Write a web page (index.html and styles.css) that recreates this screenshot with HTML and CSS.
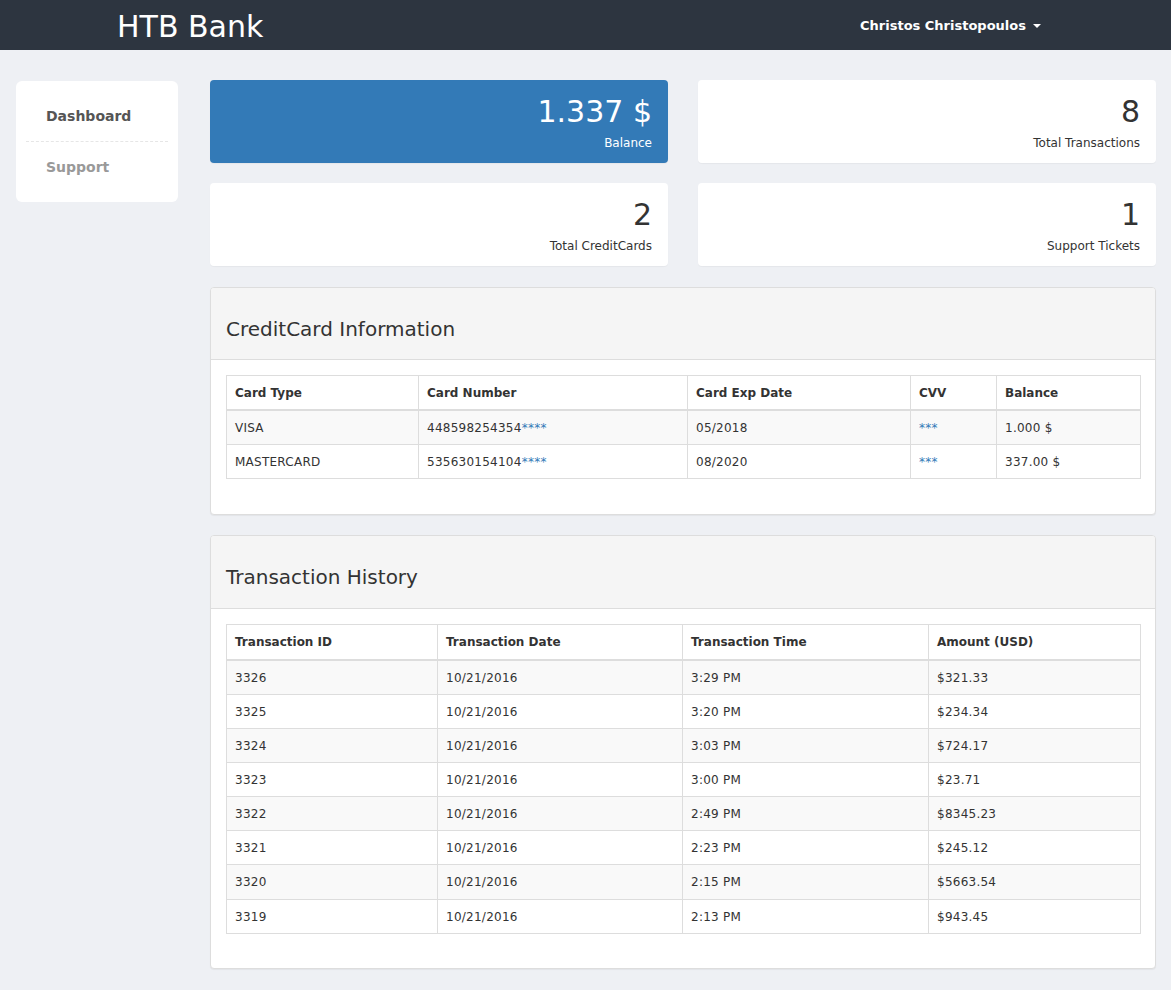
FILE: index.html
```html
<!DOCTYPE html>
<html lang="en">
<head>
<meta charset="utf-8">
<title>HTB Bank</title>
<link rel="stylesheet" href="styles.css">
</head>
<body>
<nav class="navbar">
  <div class="brand">HTB Bank</div>
  <div class="user">Christos Christopoulos <span class="caret"></span></div>
</nav>
<div class="page">
  <aside class="sidebar">
    <a class="nav-item active">Dashboard</a>
    <a class="nav-item">Support</a>
  </aside>
  <main class="main">
    <div class="stats">
      <div class="stat stat-primary">
        <div class="stat-value">1.337 $</div>
        <div class="stat-label">Balance</div>
      </div>
      <div class="stat">
        <div class="stat-value">8</div>
        <div class="stat-label">Total Transactions</div>
      </div>
      <div class="stat">
        <div class="stat-value">2</div>
        <div class="stat-label">Total CreditCards</div>
      </div>
      <div class="stat">
        <div class="stat-value">1</div>
        <div class="stat-label">Support Tickets</div>
      </div>
    </div>

    <section class="panel">
      <div class="panel-heading"><h3 class="panel-title">CreditCard Information</h3></div>
      <div class="panel-body">
        <table class="table cards">
          <thead>
            <tr><th class="c1">Card Type</th><th class="c2">Card Number</th><th class="c3">Card Exp Date</th><th class="c4">CVV</th><th class="c5">Balance</th></tr>
          </thead>
          <tbody>
            <tr><td>VISA</td><td>448598254354<span class="mask">****</span></td><td>05/2018</td><td><span class="mask">***</span></td><td>1.000 $</td></tr>
            <tr><td>MASTERCARD</td><td>535630154104<span class="mask">****</span></td><td>08/2020</td><td><span class="mask">***</span></td><td>337.00 $</td></tr>
          </tbody>
        </table>
      </div>
    </section>

    <section class="panel panel-tx">
      <div class="panel-heading"><h3 class="panel-title">Transaction History</h3></div>
      <div class="panel-body">
        <table class="table tx">
          <thead>
            <tr><th class="t1">Transaction ID</th><th class="t2">Transaction Date</th><th class="t3">Transaction Time</th><th class="t4">Amount (USD)</th></tr>
          </thead>
          <tbody>
            <tr><td>3326</td><td>10/21/2016</td><td>3:29 PM</td><td>$321.33</td></tr>
            <tr><td>3325</td><td>10/21/2016</td><td>3:20 PM</td><td>$234.34</td></tr>
            <tr><td>3324</td><td>10/21/2016</td><td>3:03 PM</td><td>$724.17</td></tr>
            <tr><td>3323</td><td>10/21/2016</td><td>3:00 PM</td><td>$23.71</td></tr>
            <tr><td>3322</td><td>10/21/2016</td><td>2:49 PM</td><td>$8345.23</td></tr>
            <tr><td>3321</td><td>10/21/2016</td><td>2:23 PM</td><td>$245.12</td></tr>
            <tr><td>3320</td><td>10/21/2016</td><td>2:15 PM</td><td>$5663.54</td></tr>
            <tr><td>3319</td><td>10/21/2016</td><td>2:13 PM</td><td>$943.45</td></tr>
          </tbody>
        </table>
      </div>
    </section>
  </main>
</div>
</body>
</html>
```

FILE: styles.css
```css
* { box-sizing: border-box; }
html, body { margin: 0; padding: 0; }
body {
  font-family: "DejaVu Sans", Verdana, sans-serif;
  font-size: 12px;
  line-height: 1.428571;
  color: #333;
  background: #eef0f4;
}

.navbar {
  height: 50px;
  background: #2d3540;
  display: flex;
  align-items: flex-start;
  justify-content: space-between;
  padding: 0 130px 0 117px;
}
.brand {
  color: #fff;
  font-size: 30px;
  line-height: 46px;
  padding-top: 4px;
}
.user {
  color: #fff;
  font-weight: bold;
  font-size: 13px;
  line-height: 20px;
  padding-top: 16px;
  display: flex;
  align-items: center;
}
.caret {
  display: inline-block;
  width: 0;
  height: 0;
  margin-left: 7px;
  border-top: 4px solid #fff;
  border-left: 4px solid transparent;
  border-right: 4px solid transparent;
}

.page {
  display: flex;
  align-items: flex-start;
  padding: 30px 15px 20px 16px;
}

.sidebar {
  flex: 0 0 162px;
  width: 162px;
  margin-top: 1px;
  background: #fff;
  border-radius: 6px;
  padding: 10px;
  display: flex;
  flex-direction: column;
}
.nav-item {
  display: block;
  height: 50px;
  line-height: 50px;
  padding-left: 20px;
  font-size: 14px;
  font-weight: bold;
  color: #999;
}
.nav-item.active {
  height: 51px;
  color: #555;
  border-bottom: 1px dashed #e6e6e6;
}

.main {
  flex: 1 1 0;
  min-width: 0;
  margin-left: 32px;
}

.stats {
  display: grid;
  grid-template-columns: 1fr 1fr;
  column-gap: 30px;
  row-gap: 20px;
  margin-bottom: 21px;
}
.stat {
  background: #fff;
  border-radius: 4px;
  height: 83px;
  padding: 12px 16px 0 16px;
  text-align: right;
  box-shadow: 0 1px 1px rgba(0,0,0,0.04);
}
.stat-primary {
  background: #337ab7;
  color: #fff;
}
.stat-value {
  font-size: 30px;
  line-height: 40px;
}
.stat-label {
  font-size: 12px;
  line-height: 18px;
  margin-top: 2px;
}

.panel {
  background: #fff;
  border: 1px solid #ddd;
  border-radius: 4px;
  box-shadow: 0 1px 1px rgba(0,0,0,0.05);
  margin-bottom: 20px;
}
.panel-heading {
  background: #f5f5f5;
  border-bottom: 1px solid #ddd;
  border-radius: 3px 3px 0 0;
  padding: 30px 15px 19px 15px;
}
.panel-tx .panel-heading { padding-bottom: 20px; }
.panel-title {
  margin: 0;
  font-size: 20px;
  font-weight: normal;
  line-height: 22px;
  color: #333;
}
.panel-body {
  padding: 15px 15px 35px 15px;
}
.panel-tx .panel-body { padding-bottom: 34px; }

.table {
  width: 100%;
  border-collapse: collapse;
  table-layout: fixed;
}
.table th, .table td {
  border: 1px solid #ddd;
  padding: 9px 8px 7px 8px;
  text-align: left;
  line-height: 1.428571;
  font-size: 12px;
}
.table td { letter-spacing: 0.25px; }
.table th {
  font-weight: bold;
  border-bottom: 2px solid #ddd;
}
.table tbody tr:nth-child(odd) { background: #f9f9f9; }

.mask { color: #337ab7; }

.c1 { width: 192px; }
.c2 { width: 269px; }
.c3 { width: 223px; }
.c4 { width: 86px; }
.c5 { width: 144px; }

.t1 { width: 211px; }
.t2 { width: 245px; }
.t3 { width: 246px; }
.t4 { width: 212px; }
```
